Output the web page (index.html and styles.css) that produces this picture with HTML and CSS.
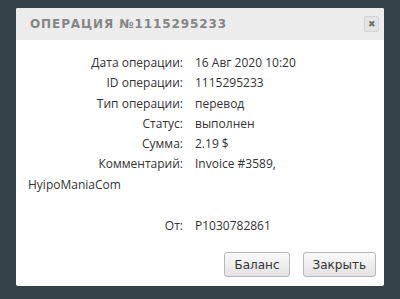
FILE: index.html
```html
<!DOCTYPE html>
<html lang="ru">
<head>
    <meta charset="UTF-8">
    <title>Операция</title>
    <link rel="stylesheet" href="styles.css">
</head>
<body>
    <div class="modal">
        <div class="modal-header">
            <span class="modal-title">Операция №1115295233</span>
            <button class="close-btn">&#x2716;</button>
        </div>
        <div class="modal-body">
            <div class="row"><span class="label">Дата операции:</span>16 Авг 2020 10:20</div>
            <div class="row"><span class="label">ID операции:</span>1115295233</div>
            <div class="row"><span class="label">Тип операции:</span>перевод</div>
            <div class="row"><span class="label">Статус:</span>выполнен</div>
            <div class="row"><span class="label">Сумма:</span>2.19 $</div>
            <div class="row"><span class="label">Комментарий:</span>Invoice #3589,<br>HyipoManiaCom</div>
            <div class="row from"><span class="label">От:</span>P1030782861</div>
        </div>
        <div class="modal-footer">
            <button class="btn">Баланс</button>
            <button class="btn">Закрыть</button>
        </div>
    </div>
</body>
</html>
```

FILE: styles.css
```css
body {
    margin: 0;
    padding: 8px 16px 0 16px;
    background: #36424a;
    font-family: "Open Sans", sans-serif;
    height: 299px;
    box-sizing: border-box;
    overflow: hidden;
}
.modal {
    width: 368px;
    height: 278px;
    background: #fff;
    border-radius: 2px;
    display: flex;
    flex-direction: column;
}
.modal-header {
    height: 32px;
    background: #ececec;
    display: flex;
    align-items: center;
    justify-content: space-between;
    padding: 0 5px 0 14px;
    border-radius: 2px 2px 0 0;
}
.modal-title {
    text-transform: uppercase;
    color: #858585;
    font-family: "DejaVu Sans", sans-serif;
    font-weight: bold;
    font-size: 12px;
    letter-spacing: 0.9px;
}
.close-btn {
    width: 15px;
    height: 16px;
    padding: 0;
    border: 1px solid #d4d4d4;
    border-radius: 2px;
    background: #e4e4e4;
    color: #6f6f6f;
    font-size: 9px;
    line-height: 14px;
}
.modal-body {
    padding: 13px 12px 0 12px;
    font-size: 12px;
    color: #333;
    line-height: 20.3px;
}
.label {
    display: inline-block;
    width: 155px;
    text-align: right;
    padding-right: 12px;
}
.from {
    margin-top: 21px;
}
.modal-footer {
    margin-top: auto;
    display: flex;
    justify-content: flex-end;
    gap: 13px;
    padding: 0 8px 9px 0;
}
.btn {
    height: 25px;
    padding: 0 9px;
    border: 1px solid #b8b8b8;
    border-radius: 3px;
    background: linear-gradient(#fafafa, #e2e2e2);
    color: #333;
    font-family: "DejaVu Sans", sans-serif;
    font-size: 12px;
}
```
